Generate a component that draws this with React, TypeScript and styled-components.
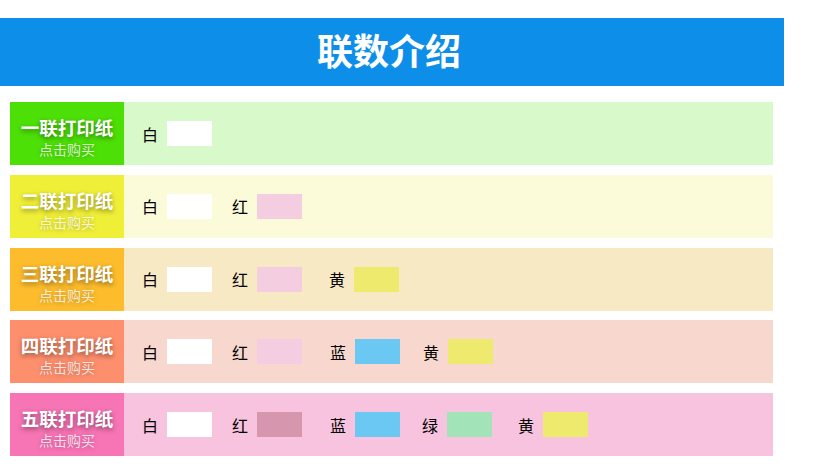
import React from "react";
import styled, { createGlobalStyle } from "styled-components";

const Global = createGlobalStyle`
  html, body { margin: 0; padding: 0; background: #fff; }
  body { font-family: "Noto Sans CJK SC", "Noto Sans", sans-serif; }
`;

const Page = styled.div`
  width: 784px;
  padding-top: 18px;
`;

const Header = styled.div`
  height: 68px;
  background: #0d8ee9;
  display: flex;
  align-items: center;
  justify-content: center;
`;

const Title = styled.h1`
  margin: 0 0 6px -6px;
  color: #fff;
  font-size: 36px;
  font-weight: 700;
  line-height: 1;
`;

const List = styled.div`
  display: flex;
  flex-direction: column;
  gap: 9.75px;
  margin: 16px 11px 0 10px;
`;

const Row = styled.div<{ $bg: string }>`
  height: 63px;
  display: flex;
  background: ${(p) => p.$bg};
`;

const Badge = styled.div<{ $bg: string }>`
  width: 114px;
  flex: none;
  box-sizing: border-box;
  padding-top: 7px;
  background: ${(p) => p.$bg};
  display: flex;
  flex-direction: column;
  align-items: center;
  justify-content: center;
  color: #fff;
`;

const BadgeTitle = styled.div`
  font-size: 18.5px;
  font-weight: 700;
  line-height: 22px;
  text-shadow: 0 2px 5px rgba(0, 0, 0, 0.45);
`;

const BadgeSub = styled.div`
  margin-top: 2px;
  font-size: 14px;
  line-height: 18px;
  color: rgba(255, 255, 255, 0.78);
  text-shadow: 0 1px 4px rgba(0, 0, 0, 0.25);
`;

const Options = styled.div`
  display: flex;
  align-items: center;
  padding-left: 18px;
`;

const Option = styled.div<{ $gap: number }>`
  display: flex;
  align-items: center;
  margin-left: ${(p) => p.$gap}px;
`;

const OptionLabel = styled.span`
  font-size: 16px;
  font-weight: 400;
  color: #000;
  line-height: 1;
  width: 16px;
`;

const Swatch = styled.span<{ $color: string }>`
  display: block;
  width: 45px;
  height: 25px;
  margin-left: 9px;
  background: ${(p) => p.$color};
`;

type Opt = { label: string; color: string; gap: number };

const rows: { title: string; badge: string; bg: string; opts: Opt[] }[] = [
  {
    title: "一联打印纸",
    badge: "#4de007",
    bg: "#d8f9ca",
    opts: [{ label: "白", color: "#ffffff", gap: 0 }],
  },
  {
    title: "二联打印纸",
    badge: "#f0ef38",
    bg: "#fbfbd9",
    opts: [
      { label: "白", color: "#ffffff", gap: 0 },
      { label: "红", color: "#f5cde0", gap: 20 },
    ],
  },
  {
    title: "三联打印纸",
    badge: "#fdbc2c",
    bg: "#f8e9c5",
    opts: [
      { label: "白", color: "#ffffff", gap: 0 },
      { label: "红", color: "#f5cde0", gap: 20 },
      { label: "黄", color: "#eeea6d", gap: 27 },
    ],
  },
  {
    title: "四联打印纸",
    badge: "#fe8f6d",
    bg: "#f8d8ce",
    opts: [
      { label: "白", color: "#ffffff", gap: 0 },
      { label: "红", color: "#f5cde0", gap: 20 },
      { label: "蓝", color: "#6bc8f2", gap: 28 },
      { label: "黄", color: "#eeea6d", gap: 23 },
    ],
  },
  {
    title: "五联打印纸",
    badge: "#f774b5",
    bg: "#f7c3de",
    opts: [
      { label: "白", color: "#ffffff", gap: 0 },
      { label: "红", color: "#d696ad", gap: 20 },
      { label: "蓝", color: "#6bc8f2", gap: 28 },
      { label: "绿", color: "#a2e3b8", gap: 22 },
      { label: "黄", color: "#eeea6d", gap: 26 },
    ],
  },
];

export default function App() {
  return (
    <Page>
      <Global />
      <Header>
        <Title>联数介绍</Title>
      </Header>
      <List>
        {rows.map((r) => (
          <Row key={r.title} $bg={r.bg}>
            <Badge $bg={r.badge}>
              <BadgeTitle>{r.title}</BadgeTitle>
              <BadgeSub>点击购买</BadgeSub>
            </Badge>
            <Options>
              {r.opts.map((o) => (
                <Option key={o.label} $gap={o.gap}>
                  <OptionLabel>{o.label}</OptionLabel>
                  <Swatch $color={o.color} />
                </Option>
              ))}
            </Options>
          </Row>
        ))}
      </List>
    </Page>
  );
}
